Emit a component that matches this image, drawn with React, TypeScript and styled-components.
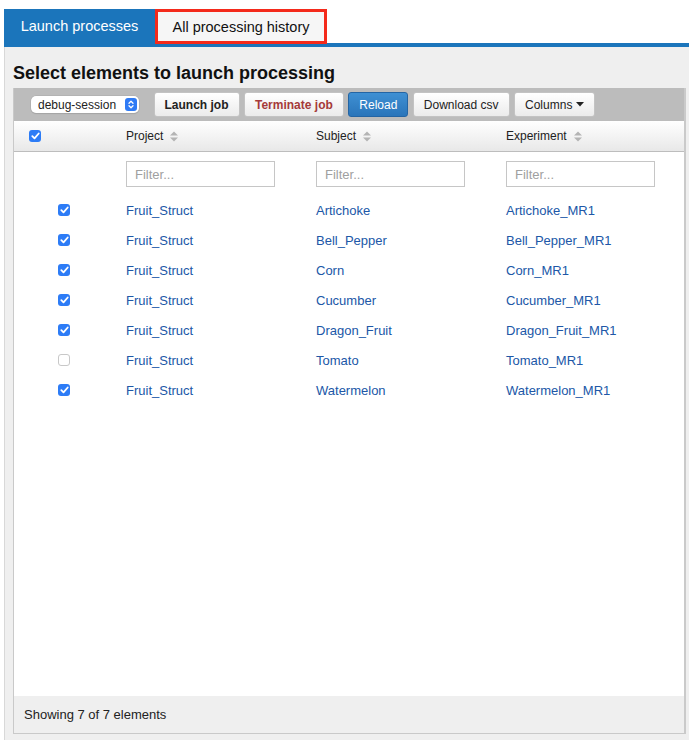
import React from "react";
import styled, { createGlobalStyle } from "styled-components";

const Global = createGlobalStyle`
  html, body, #root { height: 100%; }
  body {
    margin: 0;
    background: #ffffff;
    font-family: "Liberation Sans", Arial, Helvetica, sans-serif;
    color: #222;
  }
  * { box-sizing: border-box; }
`;

const Page = styled.div`
  display: flex;
  flex-direction: column;
  height: 100%;
  padding: 9px 0 0 4px;
`;

const TabBar = styled.div`
  display: flex;
  align-items: flex-start;
  height: 38px;
  border-bottom: 4px solid #1b75bb;
`;

const Tab = styled.div<{ $active?: boolean }>`
  display: flex;
  align-items: center;
  justify-content: center;
  font-size: 14.5px;
  ${(p) =>
    p.$active
      ? `
    width: 151px;
    height: 34px;
    background: #1b75bb;
    color: #ffffff;
  `
      : `
    width: 172px;
    height: 35px;
    background: #f6f6f6;
    color: #111;
    border: 3px solid #f42a1b;
    position: relative;
  `}
`;

const Panel = styled.div`
  flex: 1;
  background: #efefef;
  border-left: 1px solid #d8d8d8;
  padding: 15px 3px 6px 8px;
`;

const Title = styled.h2`
  margin: 0 0 4px;
  font-size: 18px;
  line-height: 22px;
  font-weight: bold;
  color: #111;
`;

const TableBox = styled.div`
  border-left: 1px solid #c9c9c9;
  border-right: 2px solid #cacaca;
  border-bottom: 1px solid #c9c9c9;
`;

const Toolbar = styled.div`
  display: flex;
  align-items: center;
  height: 33px;
  background: #bcbcbc;
  padding-left: 17px;
  gap: 4.5px;
`;

const SelectBox = styled.div`
  display: flex;
  align-items: center;
  justify-content: space-between;
  width: 108px;
  height: 17px;
  margin-right: 10px;
  padding: 0 2px 0 7px;
  background: #ffffff;
  border-radius: 5px;
  box-shadow: 0 0 0 0.5px #a9a9a9, 0 1px 1px rgba(0, 0, 0, 0.15);
  font-size: 12px;
  color: #222;
`;

const Stepper = styled.span`
  display: flex;
  align-items: center;
  justify-content: center;
  width: 12px;
  height: 13px;
  border-radius: 3px;
  background: #2f7bf5;
`;

const Button = styled.button<{ $variant?: "default" | "primary" | "danger"; $bold?: boolean }>`
  height: 25px;
  padding: 0 10px;
  border-radius: 3px;
  font-family: inherit;
  font-size: 12px;
  display: flex;
  align-items: center;
  gap: 4px;
  font-weight: ${(p) => (p.$bold ? "bold" : "normal")};
  ${(p) =>
    p.$variant === "primary"
      ? `
    background: linear-gradient(#3f90d3, #2a75ba);
    border: 1px solid #2465a4;
    color: #ffffff;
  `
      : `
    background: linear-gradient(#ffffff, #ebebeb);
    border: 1px solid #c3c3c3;
    color: ${p.$variant === "danger" ? "#a53a3a" : "#222"};
  `}
`;

const Grid = styled.div`
  display: grid;
  grid-template-columns: 112px 190px 190px 1fr;
  align-items: center;
`;

const HeaderRow = styled(Grid)`
  height: 31px;
  background: linear-gradient(#ffffff, #e8e8e8);
  border-bottom: 1px solid #bdbdbd;
  font-size: 12px;
  color: #222;
`;

const HeadCell = styled.div`
  display: flex;
  align-items: center;
  gap: 7px;
`;

const CheckCell = styled.div<{ $indent: number }>`
  display: flex;
  align-items: center;
  padding-left: ${(p) => p.$indent}px;
`;

const Body = styled.div`
  height: 544px;
  background: #ffffff;
`;

const FilterRow = styled(Grid)`
  padding: 9px 0 8px;
`;

const FilterInput = styled.input`
  width: 149px;
  height: 26px;
  border: 1px solid #c6c6c6;
  border-radius: 0;
  padding: 0 8px;
  font-family: inherit;
  font-size: 13px;
  color: #222;
  background: #ffffff;
  outline: none;
  &::placeholder { color: #a0a0a0; }
`;

const DataRow = styled(Grid)`
  height: 30px;
  font-size: 13px;
`;

const Link = styled.a`
  color: #2057a7;
  text-decoration: none;
`;

const Footer = styled.div`
  height: 37px;
  display: flex;
  align-items: center;
  padding-left: 10px;
  background: #efefef;
  font-size: 13px;
  color: #222;
`;

const Box = styled.span<{ $checked: boolean }>`
  display: inline-flex;
  align-items: center;
  justify-content: center;
  width: 12px;
  height: 12px;
  border-radius: 3px;
  ${(p) =>
    p.$checked
      ? `background: #2d7cf6;`
      : `background: #ffffff; border: 1px solid #c8c8c8;`}
`;

const Check = ({ checked }: { checked: boolean }) => (
  <Box $checked={checked}>
    {checked && (
      <svg width="9" height="8" viewBox="0 0 9 8">
        <path d="M1.3 4.2 L3.5 6.3 L7.7 1.5" fill="none" stroke="#fff" strokeWidth="1.8" strokeLinecap="round" strokeLinejoin="round" />
      </svg>
    )}
  </Box>
);

const SortIcon = () => (
  <svg width="8" height="11" viewBox="0 0 8 11">
    <path d="M0 4.6 L4 0.6 L8 4.6 Z" fill="#b4b4b4" />
    <path d="M0 6.4 L4 10.4 L8 6.4 Z" fill="#b4b4b4" />
  </svg>
);

const Caret = () => (
  <svg width="8" height="5" viewBox="0 0 8 5">
    <path d="M0 0 L8 0 L4 4.5 Z" fill="#222" />
  </svg>
);

const rows = [
  { subject: "Artichoke", checked: true },
  { subject: "Bell_Pepper", checked: true },
  { subject: "Corn", checked: true },
  { subject: "Cucumber", checked: true },
  { subject: "Dragon_Fruit", checked: true },
  { subject: "Tomato", checked: false },
  { subject: "Watermelon", checked: true },
];

export default function App() {
  return (
    <>
      <Global />
      <Page>
        <TabBar>
          <Tab $active>Launch processes</Tab>
          <Tab>All processing history</Tab>
        </TabBar>
        <Panel>
          <Title>Select elements to launch processing</Title>
          <TableBox>
            <Toolbar>
              <SelectBox>
                <span>debug-session</span>
                <Stepper>
                  <svg width="6" height="9" viewBox="0 0 6 9">
                    <path d="M1 3.3 L3 1.3 L5 3.3 M1 5.7 L3 7.7 L5 5.7" fill="none" stroke="#fff" strokeWidth="1.3" strokeLinecap="round" strokeLinejoin="round" />
                  </svg>
                </Stepper>
              </SelectBox>
              <Button $bold>Launch job</Button>
              <Button $bold $variant="danger">Terminate job</Button>
              <Button $variant="primary">Reload</Button>
              <Button>Download csv</Button>
              <Button>
                Columns <Caret />
              </Button>
            </Toolbar>
            <HeaderRow>
              <CheckCell $indent={15}>
                <Check checked />
              </CheckCell>
              <HeadCell>Project <SortIcon /></HeadCell>
              <HeadCell>Subject <SortIcon /></HeadCell>
              <HeadCell>Experiment <SortIcon /></HeadCell>
            </HeaderRow>
            <Body>
              <FilterRow>
                <div />
                <div><FilterInput placeholder="Filter..." /></div>
                <div><FilterInput placeholder="Filter..." /></div>
                <div><FilterInput placeholder="Filter..." /></div>
              </FilterRow>
              {rows.map((r) => (
                <DataRow key={r.subject}>
                  <CheckCell $indent={44}>
                    <Check checked={r.checked} />
                  </CheckCell>
                  <div><Link>Fruit_Struct</Link></div>
                  <div><Link>{r.subject}</Link></div>
                  <div><Link>{r.subject}_MR1</Link></div>
                </DataRow>
              ))}
            </Body>
            <Footer>Showing 7 of 7 elements</Footer>
          </TableBox>
        </Panel>
      </Page>
    </>
  );
}
